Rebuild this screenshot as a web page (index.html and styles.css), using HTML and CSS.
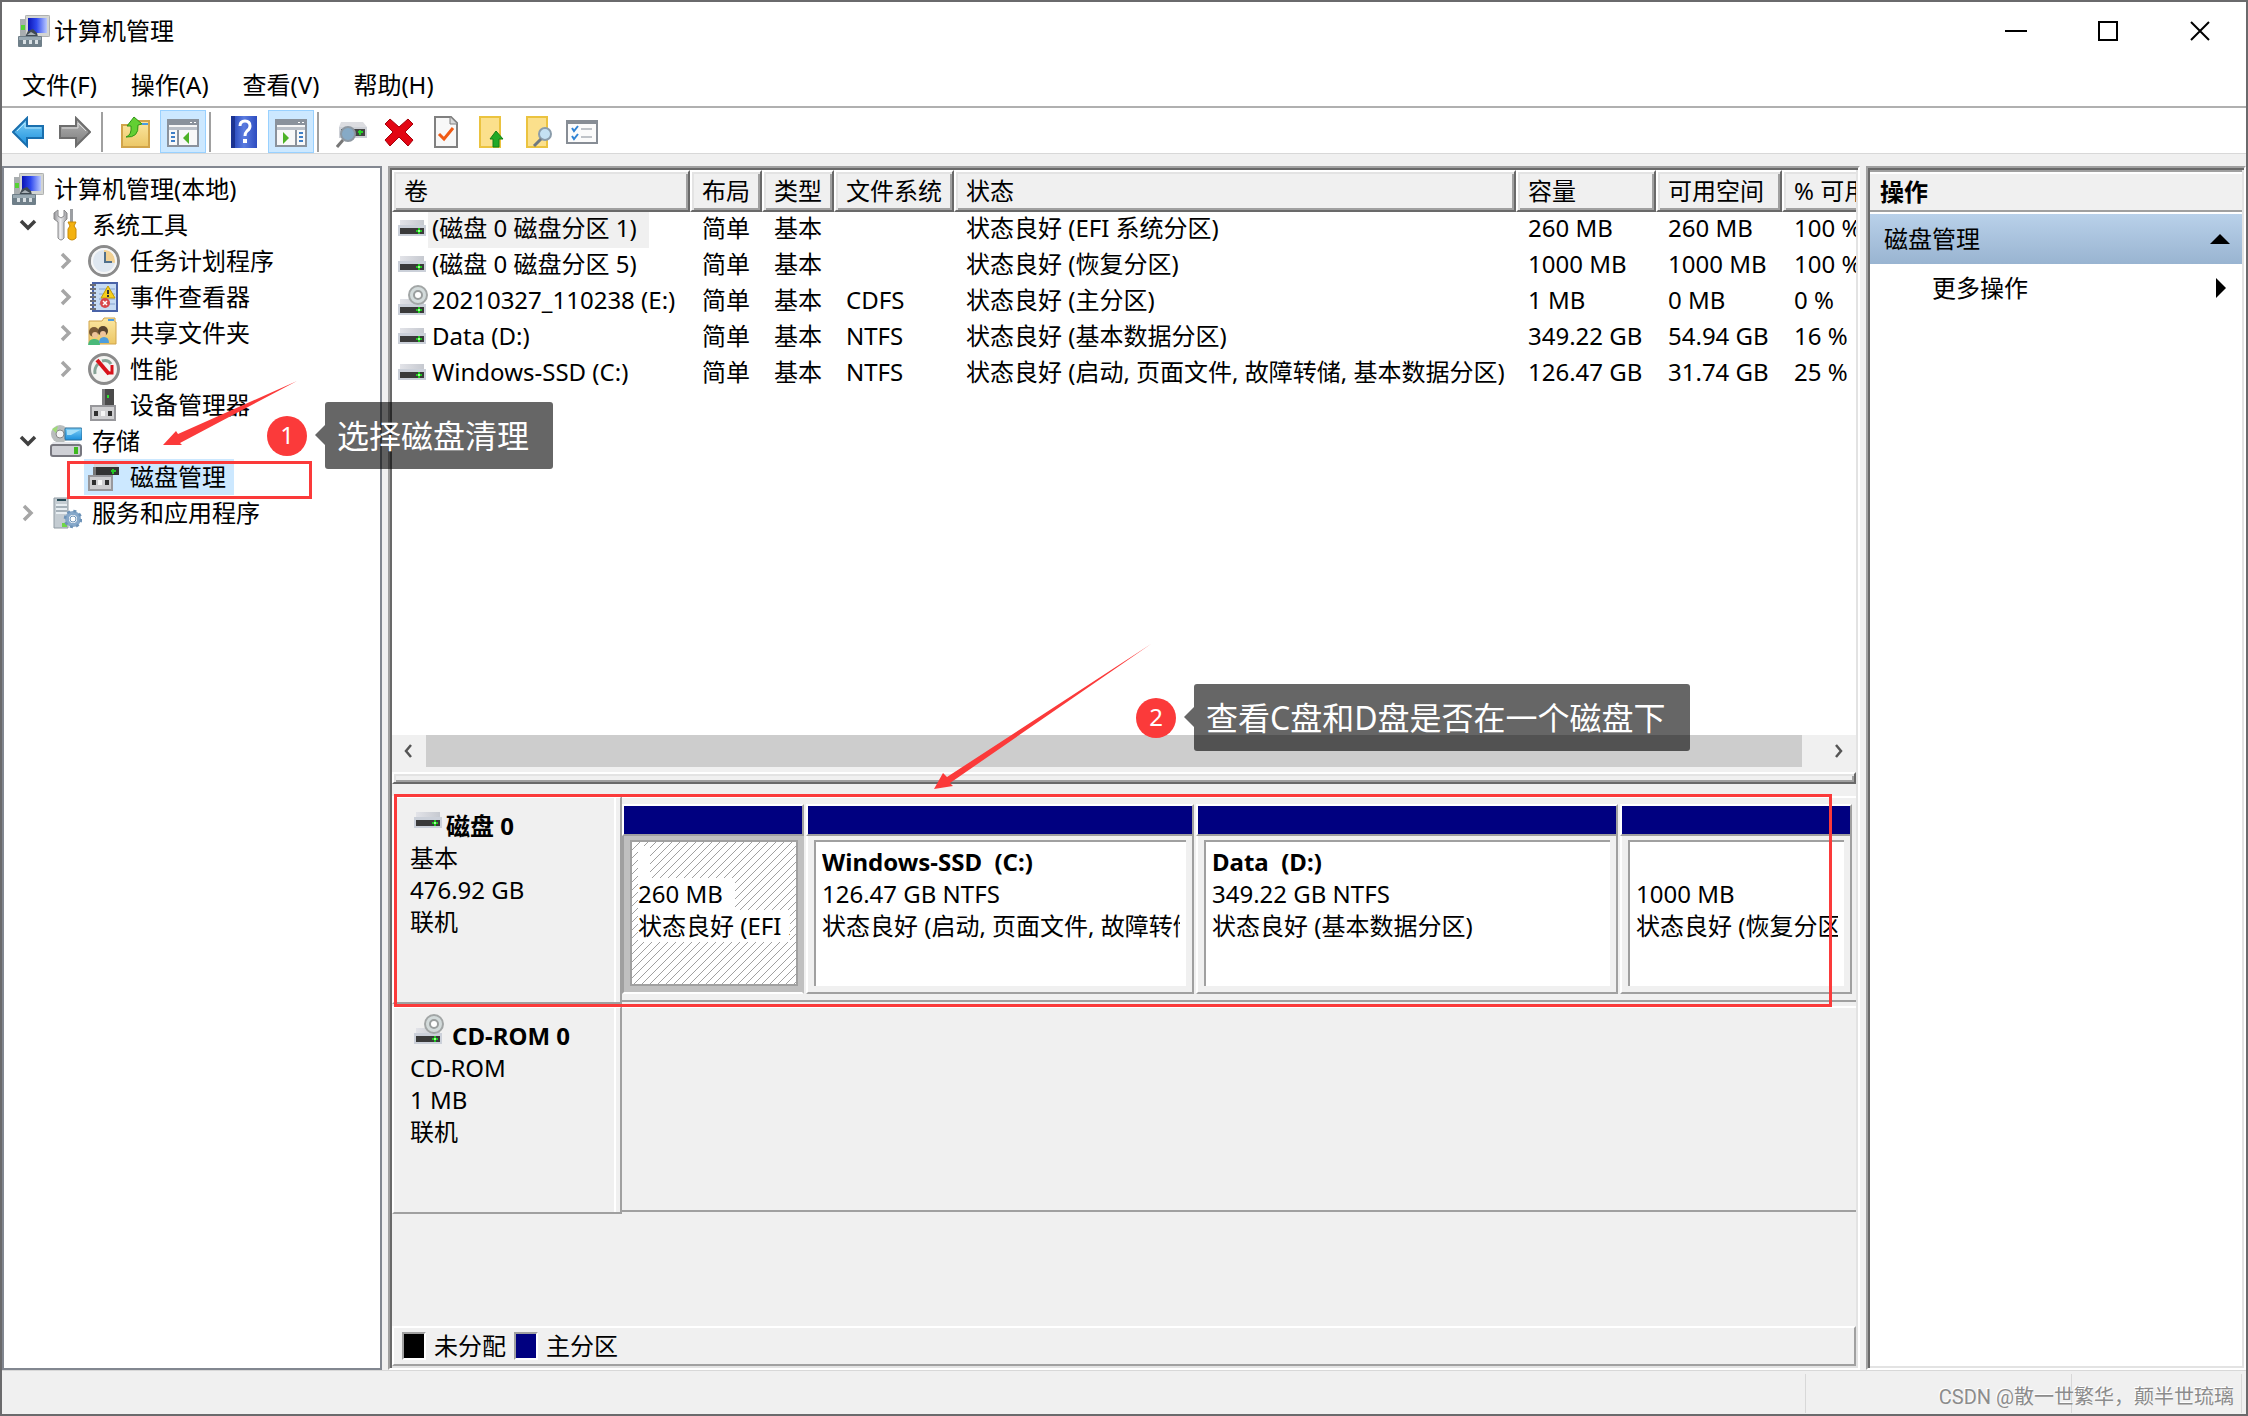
FILE: index.html
```html
<!DOCTYPE html>
<html lang="zh-CN">
<head>
<meta charset="utf-8">
<title>计算机管理</title>
<link rel="stylesheet" href="styles.css">
</head>
<body>
<svg class="defs" aria-hidden="true">
  <defs>
    <linearGradient id="gScreen" x1="0" y1="0" x2="1" y2="0"><stop offset="0" stop-color="#0a14b4"/><stop offset=".45" stop-color="#2f49ee"/><stop offset="1" stop-color="#b9c8ff"/></linearGradient>
    <linearGradient id="gBlue" x1="0" y1="0" x2="0" y2="1"><stop offset="0" stop-color="#7fd0f7"/><stop offset="1" stop-color="#1b8fdc"/></linearGradient>
    <linearGradient id="gGrey" x1="0" y1="0" x2="0" y2="1"><stop offset="0" stop-color="#b5b5b5"/><stop offset="1" stop-color="#7c7c7c"/></linearGradient>
    <linearGradient id="gFolder" x1="0" y1="0" x2="0" y2="1"><stop offset="0" stop-color="#fbe7a2"/><stop offset="1" stop-color="#ecc766"/></linearGradient>
    <linearGradient id="gHelp" x1="0" y1="0" x2="1" y2="0"><stop offset="0" stop-color="#1e3eb4"/><stop offset=".5" stop-color="#5b7ce0"/><stop offset="1" stop-color="#2d4cc0"/></linearGradient>
    <linearGradient id="gLid" x1="0" y1="0" x2="1" y2="0"><stop offset="0" stop-color="#e2e3e8"/><stop offset="1" stop-color="#c6c9d0"/></linearGradient>
    <linearGradient id="gMetal" x1="0" y1="0" x2="1" y2="0"><stop offset="0" stop-color="#8f8f93"/><stop offset=".5" stop-color="#f0f0f2"/><stop offset="1" stop-color="#9a9a9e"/></linearGradient>
    <symbol id="computer" viewBox="0 0 32 32">
      <rect x="2" y="4" width="6" height="18" fill="#a9aeb0"/><rect x="3" y="10" width="4" height="5" fill="#55d334"/>
      <rect x="7" y="0" width="25" height="22" rx="1" fill="#d3d5d2"/><rect x="7.500" y=".5" width="24" height="21" rx="1" fill="none" stroke="#aeb0b0"/>
      <rect x="10" y="3" width="19" height="15" fill="url(#gScreen)"/>
      <path d="M7 22l3-6 5-2 4 4 1 4z" fill="#3f4a52"/><path d="M9 20l4-3 5 3z" fill="#a7b0b6"/>
      <rect x="0" y="21" width="24" height="11" rx="1" fill="#6f7f89"/><path d="M1 22h22v3H1z" fill="#9aaab3"/><path d="M5 25h3v4H5zM11 25h3v4h-3zM17 25h3v4h-3z" fill="#d9e0e4"/>
    </symbol>
    <symbol id="tools" viewBox="0 0 32 32">
      <path d="M8 1L4 4v6l4 3v16q3 4 6 0V13l3-3V4l-3-3v6l-3 2-3-2z" fill="url(#gMetal)" stroke="#8a8a8c"/>
      <path d="M20 0h3v14h-3z" fill="#9b9ea2"/><path d="M18 13h8l-2 4 2 3v9q-4 4-8 0v-9l2-3z" fill="#f3b211" stroke="#c98a06"/>
    </symbol>
    <symbol id="clock" viewBox="0 0 32 32">
      <circle cx="16" cy="16" r="14.5" fill="#dfe7f0" stroke="#8b8b8b" stroke-width="3"/>
      <path d="M16 16V4a12 12 0 0 1 11 14z" fill="#f2d193"/><circle cx="16" cy="16" r="12" fill="none" stroke="#f6f6f6" stroke-width="2"/>
      <path d="M17 7v10h7" fill="none" stroke="#51708c" stroke-width="2"/>
    </symbol>
    <symbol id="events" viewBox="0 0 32 32">
      <rect x="5" y="2" width="24" height="28" fill="#c6dbf3" stroke="#4a63a8" stroke-width="2"/><path d="M11 8h16M11 13h16M11 18h16M11 23h16" stroke="#86a4cf"/>
      <path d="M2 4h6M2 8h6M2 12h6M2 16h6M2 20h6M2 24h6M2 28h6" stroke="#6e7076" stroke-width="2"/>
      <path d="M20 5l7 12H13z" fill="#f6cf1d" stroke="#c39b05"/><path d="M19 9h2v4h-2zM19 14h2v2h-2z" fill="#333"/>
      <circle cx="17" cy="22" r="5" fill="#d8474b"/><path d="M15 20l4 4m0-4l-4 4" stroke="#fff" stroke-width="1.5"/>
    </symbol>
    <symbol id="shared" viewBox="0 0 32 32">
      <path d="M1 4h13l2-3h11v4h1v22H1z" fill="url(#gFolder)" stroke="#d1a44a"/><path d="M20 3h6" stroke="#4b9be2" stroke-width="2"/>
      <circle cx="6" cy="15" r="5" fill="#7a5a36"/><circle cx="7" cy="18" r="3" fill="#eec49b"/><circle cx="15" cy="14" r="5" fill="#57432e"/><circle cx="15" cy="17" r="3" fill="#eec49b"/>
      <path d="M0 28q1-7 7-6 5 0 5 6z" fill="#49b97a"/><path d="M11 26q0-6 5-6t5 6z" fill="#4c9ddd"/>
    </symbol>
    <symbol id="gauge" viewBox="0 0 32 32">
      <circle cx="16" cy="16" r="14.5" fill="#f4f4f2" stroke="#8b8b8b" stroke-width="3"/>
      <path d="M7 21q-1-6 3-10m4-3q6-2 9 3" fill="none" stroke="#86a396" stroke-width="3"/>
      <path d="M9 7l12 14" stroke="#d8121a" stroke-width="4"/><path d="M24 12v8h-5" fill="none" stroke="#d8121a" stroke-width="3"/>
    </symbol>
    <symbol id="device" viewBox="0 0 32 32">
      <rect x="14" y="0" width="12" height="17" fill="#4a4a4a"/><rect x="14" y="0" width="3" height="17" fill="#7d7d7f"/><rect x="19" y="6" width="2" height="3" fill="#2fe02f"/>
      <rect x="3" y="17" width="24" height="14" fill="#d0d0d2" stroke="#97979b" stroke-width="2"/><path d="M6 22h4v5H6zM20 22h4v5h-4z" fill="#303030"/><path d="M13 22h4v5h-4z" fill="#f6f6f6"/>
    </symbol>
    <symbol id="storage" viewBox="0 0 32 32">
      <circle cx="10" cy="9" r="9" fill="#b9bdbd"/><circle cx="10" cy="9" r="4" fill="#f5f5f5" stroke="#888"/><path d="M2 4l6-3-2 7z" fill="#9fdc76"/>
      <rect x="15" y="3" width="17" height="12" rx="1" fill="url(#gBlue)" stroke="#2b6f9b"/><path d="M17 5h13l-9 5h-4z" fill="#a4def8"/>
      <path d="M3 17h26l3 5H0z" fill="#e4e5ea"/><rect x="1" y="20" width="30" height="11" rx="2" fill="#cfd0d6" stroke="#77777f" stroke-width="2"/><rect x="24" y="22" width="4" height="7" fill="#3db81f"/>
    </symbol>
    <symbol id="diskmgmt" viewBox="0 0 32 32">
      <path d="M6 3h22l3 3H6z" fill="#d4d5da"/><rect x="5" y="6" width="26" height="8" fill="#333"/><rect x="5" y="6" width="3" height="8" fill="#777"/><path d="M25 8v5m-2-3h5" stroke="#25c425" stroke-width="2"/>
      <rect x="1" y="15" width="23" height="14" fill="#cfcfd1" stroke="#98989c" stroke-width="2"/><path d="M4 19h4v5H4zM17 19h4v5h-4z" fill="#303030"/><path d="M10 19h4v5h-4z" fill="#f6f6f6"/>
    </symbol>
    <symbol id="services" viewBox="0 0 32 32">
      <path d="M4 1h14v30H4z" fill="#c4ccd2" stroke="#8f9aa2"/><path d="M7 2h9v2H7z" fill="#264a56"/><path d="M6 8h11M6 12h11M6 16h11" stroke="#e8eef2" stroke-width="2"/><path d="M6 10h11M6 14h11" stroke="#8695a0"/><rect x="12" y="26" width="5" height="4" fill="#6fd746"/>
      <circle cx="23" cy="22" r="6" fill="none" stroke="#86a8ca" stroke-width="4"/><circle cx="23" cy="22" r="8" fill="none" stroke="#6d93b8" stroke-width="2.5" stroke-dasharray="3 3.3"/><circle cx="23" cy="22" r="3" fill="#fff" stroke="#6d93b8"/>
    </symbol>
    <symbol id="drive" viewBox="0 0 28 16">
      <path d="M2 0h24v5H2z" fill="url(#gLid)"/><path d="M0 5h28v11H0z" fill="#cbd0d9"/><path d="M2 8h24v6H2z" fill="#3a3a3a"/><path d="M21 8v6m-3-3h6" stroke="#1fc41f" stroke-width="2"/><path d="M20 10h2v2h-2z" fill="#a5ff9c"/>
    </symbol>
    <symbol id="cdrom" viewBox="0 0 30 30">
      <path d="M2 14h24v5H2z" fill="url(#gLid)"/><path d="M0 19h28v11H0z" fill="#cbd0d9"/><path d="M2 22h24v6H2z" fill="#3a3a3a"/><path d="M21 22v6m-3-3h6" stroke="#1fc41f" stroke-width="2"/><path d="M20 24h2v2h-2z" fill="#a5ff9c"/>
      <circle cx="20" cy="10" r="9" fill="#d3dbdb" stroke="#a2a6a6" stroke-width="2"/><circle cx="20" cy="10" r="4" fill="#fff" stroke="#9a9e9e" stroke-width="2"/>
    </symbol>
    <symbol id="back" viewBox="0 0 32 32"><path d="M1 16L15 2v8h16v12H15v8z" fill="url(#gBlue)" stroke="#1a6fae" stroke-width="2"/><path d="M5 15l8-8v5h16" fill="none" stroke="#b5e5fb"/></symbol>
    <symbol id="forward" viewBox="0 0 32 32"><path d="M31 16L17 2v8H1v12h16v8z" fill="url(#gGrey)" stroke="#6d6d6d" stroke-width="2"/><path d="M3 12h16V7l8 8" fill="none" stroke="#dcdcdc"/></symbol>
    <symbol id="upfolder" viewBox="0 0 32 32"><path d="M2 9h10l2-4h15v26H2z" fill="url(#gFolder)" stroke="#d1a44a" stroke-width="2"/><path d="M22 8h6" stroke="#4b9be2" stroke-width="2"/><path d="M6 21q6-2 5-11H7l7-9 8 7-4 1q1 13-12 12z" fill="#63cf33" stroke="#2f9416"/></symbol>
    <symbol id="paneleft" viewBox="0 0 32 32"><rect x="1" y="4" width="30" height="26" fill="#f8f8f8" stroke="#8a929c" stroke-width="2"/><path d="M2 5h28v4H2z" fill="#8a929c"/><path d="M2 11h28v3H2z" fill="#b9bfc7"/><path d="M11 14v15" stroke="#8a929c" stroke-width="2"/><path d="M4 17h4M4 21h4M4 25h4" stroke="#3f7fc6" stroke-width="2"/><path d="M22 16v12l-6-6z" fill="#4db226"/><path d="M23 6h2v1h-2zM27 6h2v1h-2z" fill="#fff"/></symbol>
    <symbol id="paneright" viewBox="0 0 32 32"><rect x="1" y="4" width="30" height="26" fill="#f8f8f8" stroke="#8a929c" stroke-width="2"/><path d="M2 5h28v4H2z" fill="#8a929c"/><path d="M2 11h28v3H2z" fill="#b9bfc7"/><path d="M21 14v15" stroke="#8a929c" stroke-width="2"/><path d="M24 17h4M24 21h4M24 25h4" stroke="#3f7fc6" stroke-width="2"/><path d="M8 16v12l6-6z" fill="#4db226"/><path d="M23 6h2v1h-2zM27 6h2v1h-2z" fill="#fff"/></symbol>
    <symbol id="help" viewBox="0 0 32 32"><rect x="3" y="0" width="26" height="32" fill="url(#gHelp)"/><path d="M3 0h4v32H3z" fill="#1c3391"/><path d="M12 10q0-5 5-5t5 5q0 3-3 5-2 2-2 5" fill="none" stroke="#fff" stroke-width="3"/><rect x="15" y="23" width="4" height="4" fill="#fff"/></symbol>
    <symbol id="finddisk" viewBox="0 0 32 32"><path d="M5 6h22l4 5H3z" fill="#dcdde1"/><rect x="3" y="11" width="28" height="11" fill="#cdd0d6"/><rect x="5" y="13" width="24" height="7" fill="#444"/><path d="M24 14v5m-2-3h5" stroke="#25d325" stroke-width="2"/><circle cx="12" cy="18" r="7" fill="#86aac6" stroke="#8d98a2" stroke-width="2"/><path d="M7 24l-6 7" stroke="#777" stroke-width="3"/></symbol>
    <symbol id="cross" viewBox="0 0 32 32"><path d="M7 3l9 8 9-8 5 5-8 8 8 8-5 6-9-9-9 9-5-6 8-8-8-8z" fill="#e30613" stroke="#a5000a"/></symbol>
    <symbol id="doccheck" viewBox="0 0 32 32"><path d="M5 1h16l6 6v24H5z" fill="#f8f8f8" stroke="#808080" stroke-width="2"/><path d="M20 1v7h7" fill="#d9d9d9" stroke="#808080"/><path d="M9 18l5 5 9-11" fill="none" stroke="#f05a14" stroke-width="3"/></symbol>
    <symbol id="pageup" viewBox="0 0 32 32"><path d="M3 1h20v30H3z" fill="#fbe08c" stroke="#ebc33f" stroke-width="2"/><path d="M13 23l6-8 7 8h-4v8h-6v-8z" fill="#21a926" stroke="#128016"/></symbol>
    <symbol id="pagefind" viewBox="0 0 32 32"><path d="M3 1h20v30H3z" fill="#fbe08c" stroke="#ebc33f" stroke-width="2"/><circle cx="21" cy="18" r="6" fill="#c4e1f3" stroke="#8a9cab" stroke-width="2"/><path d="M17 23l-7 7" stroke="#6f7880" stroke-width="3"/></symbol>
    <symbol id="checklist" viewBox="0 0 32 32"><rect x="1" y="5" width="30" height="22" fill="#fbfbfb" stroke="#878d95" stroke-width="2"/><path d="M2 6h28v2H2z" fill="#878d95"/><path d="M6 12l2 3 4-5M6 20l2 3 4-5" fill="none" stroke="#2f83d4" stroke-width="2"/><path d="M15 13h11M15 21h11" stroke="#bfc3c8" stroke-width="2"/></symbol>
    <symbol id="open" viewBox="0 0 20 12"><path d="M3 2l7 7 7-7" fill="none" stroke="#404040" stroke-width="3.5"/></symbol>
    <symbol id="closed" viewBox="0 0 12 20"><path d="M2 3l7 7-7 7" fill="none" stroke="#a6a6a6" stroke-width="3.5"/></symbol>
  </defs>
</svg>

<div class="window">
  <header class="titlebar">
    <svg class="icon"><use href="#computer"/></svg>
    <h1>计算机管理</h1>
    <div class="controls">
      <button type="button" aria-label="最小化"><svg viewBox="0 0 22 22"><path d="M0 11h22" stroke="#000" stroke-width="2"/></svg></button>
      <button type="button" aria-label="最大化"><svg viewBox="0 0 22 22"><path d="M2 2h18v18H2z" fill="none" stroke="#000" stroke-width="2"/></svg></button>
      <button type="button" aria-label="关闭"><svg viewBox="0 0 22 22"><path d="M2 2l18 18M20 2L2 20" stroke="#000" stroke-width="2"/></svg></button>
    </div>
  </header>
  <nav class="menubar">
    <button type="button">文件(F)</button>
    <button type="button">操作(A)</button>
    <button type="button">查看(V)</button>
    <button type="button">帮助(H)</button>
  </nav>
  <div class="toolbar" role="toolbar">
    <button type="button" aria-label="后退"><svg class="icon"><use href="#back"/></svg></button>
    <button type="button" aria-label="前进"><svg class="icon"><use href="#forward"/></svg></button>
    <span class="sep"></span>
    <button type="button" aria-label="向上"><svg class="icon"><use href="#upfolder"/></svg></button>
    <button type="button" class="on" aria-label="显示/隐藏控制台树"><svg class="icon"><use href="#paneleft"/></svg></button>
    <span class="sep"></span>
    <button type="button" aria-label="帮助"><svg class="icon"><use href="#help"/></svg></button>
    <button type="button" class="on" aria-label="显示/隐藏操作窗格"><svg class="icon"><use href="#paneright"/></svg></button>
    <span class="sep"></span>
    <button type="button" aria-label="重新扫描磁盘"><svg class="icon"><use href="#finddisk"/></svg></button>
    <button type="button" aria-label="删除"><svg class="icon"><use href="#cross"/></svg></button>
    <button type="button" aria-label="属性"><svg class="icon"><use href="#doccheck"/></svg></button>
    <button type="button" aria-label="打开"><svg class="icon"><use href="#pageup"/></svg></button>
    <button type="button" aria-label="浏览"><svg class="icon"><use href="#pagefind"/></svg></button>
    <button type="button" class="narrow" aria-label="设置"><svg class="icon"><use href="#checklist"/></svg></button>
  </div>

  <main class="panes">
    <ul class="tree">
      <li class="row"><a href="#"><svg class="icon"><use href="#computer"/></svg>计算机管理(本地)</a></li>
      <li class="row"><button type="button" aria-label="折叠"><svg class="open"><use href="#open"/></svg></button><a href="#"><svg class="icon"><use href="#tools"/></svg>系统工具</a></li>
      <li class="row deep"><button type="button" aria-label="展开"><svg class="closed"><use href="#closed"/></svg></button><a href="#"><svg class="icon"><use href="#clock"/></svg>任务计划程序</a></li>
      <li class="row deep"><button type="button" aria-label="展开"><svg class="closed"><use href="#closed"/></svg></button><a href="#"><svg class="icon"><use href="#events"/></svg>事件查看器</a></li>
      <li class="row deep"><button type="button" aria-label="展开"><svg class="closed"><use href="#closed"/></svg></button><a href="#"><svg class="icon"><use href="#shared"/></svg>共享文件夹</a></li>
      <li class="row deep"><button type="button" aria-label="展开"><svg class="closed"><use href="#closed"/></svg></button><a href="#"><svg class="icon"><use href="#gauge"/></svg>性能</a></li>
      <li class="row leaf"><a href="#"><svg class="icon"><use href="#device"/></svg>设备管理器</a></li>
      <li class="row"><button type="button" aria-label="折叠"><svg class="open"><use href="#open"/></svg></button><a href="#"><svg class="icon"><use href="#storage"/></svg>存储</a></li>
      <li class="row leaf"><a href="#" class="selected"><svg class="icon"><use href="#diskmgmt"/></svg>磁盘管理</a></li>
      <li class="row"><button type="button" aria-label="展开"><svg class="closed"><use href="#closed"/></svg></button><a href="#"><svg class="icon"><use href="#services"/></svg>服务和应用程序</a></li>
    </ul>

    <section class="sunken center">
      <div class="listpane">
        <div class="listview">
          <table>
            <colgroup><col class="c-vol"><col class="c-short"><col class="c-short"><col class="c-fs"><col class="c-status"><col class="c-cap"><col class="c-free"><col class="c-pct"></colgroup>
            <thead><tr><th>卷</th><th>布局</th><th>类型</th><th>文件系统</th><th>状态</th><th>容量</th><th>可用空间</th><th>% 可用</th></tr></thead>
            <tbody>
              <tr><td><div class="name"><svg class="drive"><use href="#drive"/></svg><span class="focus">(磁盘 0 磁盘分区 1)</span></div></td><td>简单</td><td>基本</td><td></td><td>状态良好 (EFI 系统分区)</td><td>260 MB</td><td>260 MB</td><td>100 %</td></tr>
              <tr><td><div class="name"><svg class="drive"><use href="#drive"/></svg><span>(磁盘 0 磁盘分区 5)</span></div></td><td>简单</td><td>基本</td><td></td><td>状态良好 (恢复分区)</td><td>1000 MB</td><td>1000 MB</td><td>100 %</td></tr>
              <tr><td><div class="name"><svg class="cd"><use href="#cdrom"/></svg><span>20210327_110238 (E:)</span></div></td><td>简单</td><td>基本</td><td>CDFS</td><td>状态良好 (主分区)</td><td>1 MB</td><td>0 MB</td><td>0 %</td></tr>
              <tr><td><div class="name"><svg class="drive"><use href="#drive"/></svg><span>Data (D:)</span></div></td><td>简单</td><td>基本</td><td>NTFS</td><td>状态良好 (基本数据分区)</td><td>349.22 GB</td><td>54.94 GB</td><td>16 %</td></tr>
              <tr><td><div class="name"><svg class="drive"><use href="#drive"/></svg><span>Windows-SSD (C:)</span></div></td><td>简单</td><td>基本</td><td>NTFS</td><td>状态良好 (启动, 页面文件, 故障转储, 基本数据分区)</td><td>126.47 GB</td><td>31.74 GB</td><td>25 %</td></tr>
            </tbody>
          </table>
        </div>
        <div class="scrollbar">
          <button type="button" aria-label="向左滚动"><svg viewBox="0 0 12 16"><path d="M8 2L3 8l5 6" fill="none" stroke="#555" stroke-width="2.5"/></svg></button>
          <div class="track"><div class="thumb"></div></div>
          <button type="button" aria-label="向右滚动"><svg viewBox="0 0 12 16"><path d="M3 2l5 6-5 6" fill="none" stroke="#555" stroke-width="2.5"/></svg></button>
        </div>
        <div class="splitter"></div>
      </div>

      <div class="graphpane">
        <div class="disks">
          <div class="disk">
            <div class="disklabel">
              <div class="diskname"><svg class="drive"><use href="#drive"/></svg>磁盘 0</div>
              <div>基本</div><div>476.92 GB</div><div>联机</div>
            </div>
            <div class="volumes">
              <div class="volume hatched"><div class="bar"></div><div class="body"><div class="frame"><p><b>&nbsp;&nbsp;</b></p><p><span>260 MB&nbsp;&nbsp;</span></p><p><span>状态良好 (EFI 系统分区)</span></p></div></div></div>
              <div class="volume"><div class="bar"></div><div class="body"><div class="frame"><p><b>Windows-SSD&nbsp; (C:)</b></p><p>126.47 GB NTFS</p><p>状态良好 (启动, 页面文件, 故障转储, 基本数据分区)</p></div></div></div>
              <div class="volume"><div class="bar"></div><div class="body"><div class="frame"><p><b>Data&nbsp; (D:)</b></p><p>349.22 GB NTFS</p><p>状态良好 (基本数据分区)</p></div></div></div>
              <div class="volume"><div class="bar"></div><div class="body"><div class="frame"><p>&nbsp;</p><p>1000 MB</p><p>状态良好 (恢复分区)</p></div></div></div>
            </div>
          </div>
          <div class="disk">
            <div class="disklabel">
              <div class="diskname optical"><svg class="cd"><use href="#cdrom"/></svg>CD-ROM 0</div>
              <div>CD-ROM</div><div>1 MB</div><div>联机</div>
            </div>
            <div class="volumes"></div>
          </div>
        </div>
        <div class="legend">
          <span class="key"></span>未分配
          <span class="key primary"></span>主分区
        </div>
      </div>
    </section>

    <aside class="sunken actions">
      <h2>操作</h2>
      <button type="button" class="group">磁盘管理<svg viewBox="0 0 20 20"><path d="M0 15L10 5l10 10z"/></svg></button>
      <button type="button" class="more">更多操作<svg viewBox="0 0 20 20"><path d="M6 0l10 10L6 20z"/></svg></button>
    </aside>
  </main>

  <footer class="statusbar"><span></span><span></span><span></span></footer>
</div>

<div class="mark box-one"></div>
<div class="mark box-two"></div>
<svg class="arrows" viewBox="0 0 2248 1416" aria-hidden="true">
  <path d="M297 381L180 443l2 2h-19l13-14 2 3z" fill="#fb3a3a"/>
  <path d="M1151 644L950 783l3 3-19 3 9-16 4 4z" fill="#fb3a3a"/>
</svg>
<div class="note note-one"><span class="num">1</span><span class="tip">选择磁盘清理</span></div>
<div class="note note-two"><span class="num">2</span><span class="tip">查看C盘和D盘是否在一个磁盘下</span></div>
<div class="watermark">CSDN @散一世繁华，颠半世琉璃</div>
</body>
</html>
```
FILE: styles.css
```css
* { box-sizing: border-box; }
body {
  margin: 0;
  height: 100vh;
  position: relative;
  overflow: hidden;
  font: 24px/36px "Noto Sans", "Noto Sans CJK SC", sans-serif;
  color: #000;
}
button {
  font: inherit;
  color: inherit;
  border: 0;
  padding: 0;
  background: none;
  display: flex;
  align-items: center;
  justify-content: center;
}
h1, h2, p, ul { margin: 0; padding: 0; font: inherit; }
svg { flex: none; display: block; }
.defs { position: absolute; width: 0; height: 0; }
.icon { width: 32px; height: 32px; }
.drive { width: 28px; height: 16px; }
.cd { width: 30px; height: 30px; }

.window {
  height: 100%;
  display: flex;
  flex-direction: column;
  border: 2px solid #6a6a6c;
  background: #f0f0f0;
}

/* Title, menu and tool bars */
.titlebar {
  display: flex;
  align-items: center;
  gap: 4px;
  height: 58px;
  padding-left: 16px;
  background: #fff;
}
.controls { display: flex; margin-left: auto; }
.controls button { width: 92px; height: 56px; }
.controls svg { width: 22px; height: 22px; }
.menubar {
  display: flex;
  gap: 34px;
  height: 48px;
  padding: 3px 0 0 20px;
  background: #fff;
  border-bottom: 2px solid #b0b0b0;
}
.toolbar {
  display: flex;
  align-items: center;
  gap: 1px;
  height: 46px;
  padding: 2px 3px 0;
  background: #fff;
  border-bottom: 1px solid #d8d8d8;
}
.toolbar button { width: 46px; height: 43px; border: 1px solid transparent; }
.toolbar .on { background: #cce8ff; border-color: #99d1ff; }
.toolbar .narrow { width: 36px; }
.toolbar .sep { width: 2px; height: 40px; margin: 0 9px 0 2px; background: #a0a0a0; }

/* Three panes */
.panes {
  flex: 1;
  min-height: 0;
  display: grid;
  grid-template-columns: 380px minmax(0, 1fr) 380px;
  gap: 6px;
  padding-top: 12px;
}
.tree {
  list-style: none;
  background: #fff;
  border: 2px solid #828790;
  padding-top: 3px;
}
.row { display: flex; height: 36px; padding-left: 4px; }
.row button { width: 38px; padding-left: 2px; }
.deep { padding-left: 42px; }
.leaf { padding-left: 80px; }
.row a {
  display: flex;
  align-items: center;
  gap: 10px;
  padding: 0 8px 0 4px;
  color: inherit;
  text-decoration: none;
  white-space: nowrap;
}
.row .selected { background: #cce8ff; }
.open { width: 20px; height: 12px; }
.closed { width: 12px; height: 20px; }

.sunken {
  border: 2px solid;
  border-color: #a0a0a0 #fff #fff #a0a0a0;
  box-shadow: inset 2px 2px #696969, inset -2px -2px #e3e3e3;
  padding: 2px;
  min-width: 0;
}
.center { display: flex; flex-direction: column; }

/* Volume list */
.listpane { flex: 614 1 0; min-height: 0; display: flex; flex-direction: column; }
.listview { flex: 1; min-height: 0; overflow: hidden; background: #fff; }
.listview table { table-layout: fixed; width: 1570px; border-collapse: separate; border-spacing: 0; }
.c-vol { width: 298px; }
.c-short { width: 72px; }
.c-fs { width: 120px; }
.c-status { width: 562px; }
.c-cap { width: 140px; }
.c-free { width: 126px; }
.c-pct { width: 180px; }
th {
  height: 42px;
  padding: 0 0 0 10px;
  font-weight: inherit;
  line-height: 36px;
  text-align: left;
  white-space: nowrap;
  background: #f0f0f0;
  border: 2px solid;
  border-color: #fff #696969 #696969 #fff;
  box-shadow: inset 2px 2px #e3e3e3, inset -2px -2px #a0a0a0;
}
td {
  height: 36px;
  padding: 0 0 0 12px;
  vertical-align: top;
  white-space: nowrap;
  line-height: 32px;
}
td:first-child { padding-left: 6px; }
.name { display: flex; align-items: center; gap: 2px; height: 32px; }
.name span { align-self: flex-start; height: 36px; padding: 0 12px 0 4px; }
.name .cd + span { margin-left: -2px; }
.focus { background: #f0f0f0; }
.scrollbar { display: flex; height: 32px; margin-bottom: 5px; }
.scrollbar button { width: 34px; }
.scrollbar svg { width: 12px; height: 16px; }
.track { flex: 1; padding-right: 20px; }
.thumb { height: 100%; background: #cdcdcd; }
.splitter {
  height: 12px;
  border: 2px solid;
  border-color: #fff #696969 #696969 #fff;
  box-shadow: inset 2px 2px #e3e3e3, inset -2px -2px #a0a0a0;
}

/* Graphical view */
.graphpane { flex: 582 1 0; min-height: 0; display: flex; flex-direction: column; }
.disks { flex: 1; min-height: 0; padding-top: 12px; display: flex; flex-direction: column; gap: 2px; }
.disk { display: flex; align-items: flex-start; height: 208px; line-height: 32px; }
.disklabel {
  width: 230px;
  height: 208px;
  padding: 12px 0 0 16px;
  border: 2px solid;
  border-color: #fff #a0a0a0 #a0a0a0 #fff;
  box-shadow: inset -4px 0 #f0f0f0, inset -6px 0 #fff;
}
.diskname { display: flex; gap: 4px; padding-left: 4px; font-weight: bold; }
.optical { gap: 8px; }
.diskname .drive { margin-top: 2px; }
.diskname .cd { margin-top: -6px; }
.volumes {
  flex: 1;
  min-width: 0;
  height: 206px;
  padding: 6px 4px 6px 0;
  display: grid;
  grid-template-columns: 182fr 388fr 422fr 232fr;
  gap: 2px;
  border-top: 2px solid #fff;
  border-bottom: 2px solid #a0a0a0;
}
.volume { min-width: 0; display: flex; flex-direction: column; }
.bar {
  height: 32px;
  background: #000080;
  border: 2px solid;
  border-color: #fff #a0a0a0 #a0a0a0 #fff;
}
.body {
  flex: 1;
  padding: 4px 6px 6px;
  border: 2px solid;
  border-top: 0;
  border-color: #fff #a0a0a0 #a0a0a0 #fff;
}
.frame {
  height: 100%;
  padding: 4px 6px;
  background: #fff;
  border: solid #a0a0a0;
  border-width: 2px 0 0 2px;
}
.frame p { overflow: hidden; white-space: nowrap; height: 32px; line-height: 32px; }
.hatched .body { padding-right: 4px; background: #c0c0c0; border-color: #a0a0a0 #c0c0c0 #fff #a0a0a0; }
.hatched .frame {
  border-width: 2px;
  background: linear-gradient(135deg, #fff 46%, #a0a0a0 46%, #a0a0a0 54%, #fff 54%) 0 0 / 8px 8px;
}
.hatched span, .hatched b { display: inline-block; background: #fff; }
.legend {
  display: flex;
  align-items: center;
  gap: 8px;
  height: 40px;
  padding-left: 8px;
  border: 2px solid;
  border-color: #fff #a0a0a0 #a0a0a0 #fff;
}
.key {
  width: 24px;
  height: 28px;
  background: #000;
  border: 2px solid;
  border-color: #a0a0a0 #fff #fff #a0a0a0;
}
.primary { background: #000080; }

/* Actions */
.actions { background: #fff; }
.actions h2 {
  height: 42px;
  padding: 0 10px;
  font-weight: bold;
  line-height: 40px;
  background: #f0f0f0;
  border: solid #a0a0a0;
  border-width: 2px 0;
  box-shadow: inset 0 2px #fff;
}
.actions button { width: 100%; height: 50px; justify-content: space-between; padding: 0 12px 0 14px; }
.actions button svg { width: 20px; height: 20px; }
.actions .group { height: 52px; background: linear-gradient(#b9d1ea, #99b4d1); border-top: 2px solid #fff; }
.actions .more { height: 48px; padding-left: 62px; }

.statusbar {
  display: grid;
  grid-template-columns: minmax(0, 1fr) 266px 170px;
  height: 44px;
  padding: 3px 4px 1px 0;
  border-top: 1px solid #d8d8d8;
}
.statusbar span { border-right: 1px solid #d8d8d8; }

/* Annotations laid over the window */
.mark { position: absolute; border: 3px solid #fb3a3a; }
.box-one { left: 67px; top: 461px; width: 245px; height: 38px; }
.box-two { left: 394px; top: 794px; width: 1438px; height: 213px; }
.arrows { position: absolute; left: 0; top: 0; width: 2248px; height: 1416px; pointer-events: none; }
.note { position: absolute; display: flex; align-items: center; gap: 18px; color: #fff; }
.note-one { left: 267px; top: 402px; }
.note-two { left: 1136px; top: 684px; }
.num {
  width: 40px;
  height: 40px;
  border-radius: 50%;
  background: #fb3a3a;
  line-height: 38px;
  text-align: center;
}
.tip {
  position: relative;
  height: 67px;
  padding: 0 24px 0 12px;
  border-radius: 3px;
  background: rgba(0, 0, 0, .6);
  font-size: 32px;
  line-height: 68px;
  white-space: nowrap;
}
.tip::before {
  content: "";
  position: absolute;
  left: -10px;
  top: 23px;
  border: solid transparent;
  border-width: 10px 10px 10px 0;
  border-right-color: rgba(0, 0, 0, .6);
}
.watermark {
  position: absolute;
  right: 14px;
  bottom: 4px;
  font: 20px/30px Roboto, "Noto Sans CJK SC", sans-serif;
  color: #8c8c8c;
  text-shadow: -1px -1px #fff;
}
```
